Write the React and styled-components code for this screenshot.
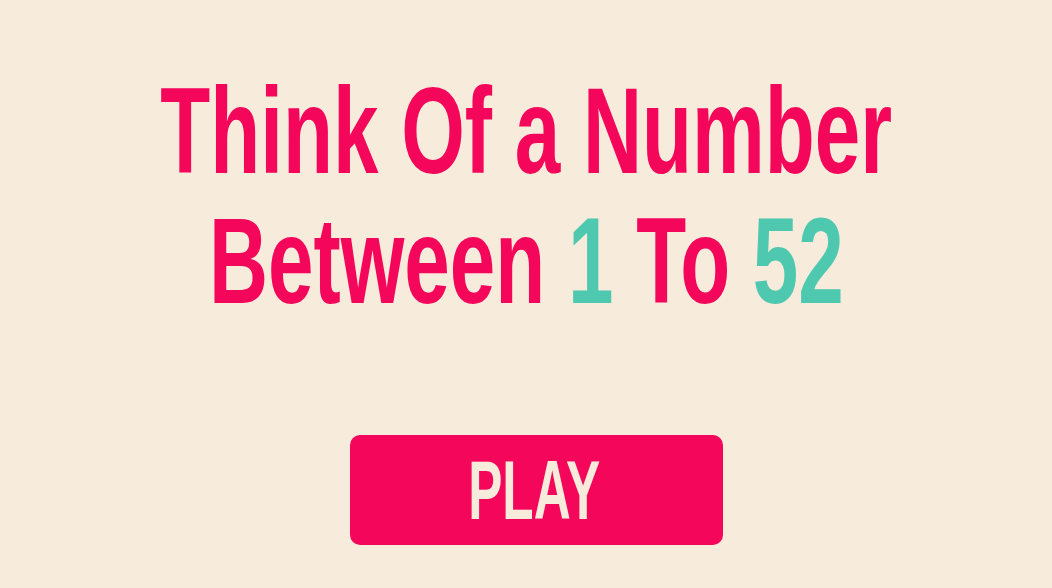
import React from "react";
import styled, { createGlobalStyle } from "styled-components";

const Global = createGlobalStyle`
  html, body {
    margin: 0;
    padding: 0;
    background: #f7ebdc;
  }
`;

const Page = styled.div`
  width: 1052px;
  height: 588px;
  background: #f7ebdc;
  display: flex;
  flex-direction: column;
  align-items: center;
  font-family: "Liberation Sans", Arial, sans-serif;
  font-weight: 700;
  overflow: hidden;
`;

const Title = styled.h1`
  margin: 66px 0 0;
  color: #f4065b;
  font-size: 123px;
  font-weight: 700;
  line-height: 130px;
  text-align: center;
  display: flex;
  flex-direction: column;
  align-items: center;
`;

// narrow display face: squeeze the sans horizontally
const Line = styled.div`
  white-space: nowrap;
  transform: scaleX(${(p) => p.$squeeze});
`;

const Accent = styled.span`
  color: #4fc8b0;
`;

const PlayButton = styled.button`
  margin: 109px 0 0 21px;
  width: 373px;
  height: 110px;
  border: none;
  border-radius: 10px;
  background: #f4065b;
  color: #f7ebdc;
  font-family: inherit;
  font-weight: 700;
  font-size: 84px;
  cursor: pointer;
  display: flex;
  align-items: center;
  justify-content: center;
  padding: 0;
`;

const Label = styled.span`
  display: inline-block;
  transform: translateX(-2px) scaleX(0.61);
`;

export default function App() {
  return (
    <Page>
      <Global />
      <Title>
        <Line $squeeze={0.665}>Think Of a Number</Line>
        <Line $squeeze={0.665}>
          Between <Accent>1</Accent> To <Accent>52</Accent>
        </Line>
      </Title>
      <PlayButton>
        <Label>PLAY</Label>
      </PlayButton>
    </Page>
  );
}
